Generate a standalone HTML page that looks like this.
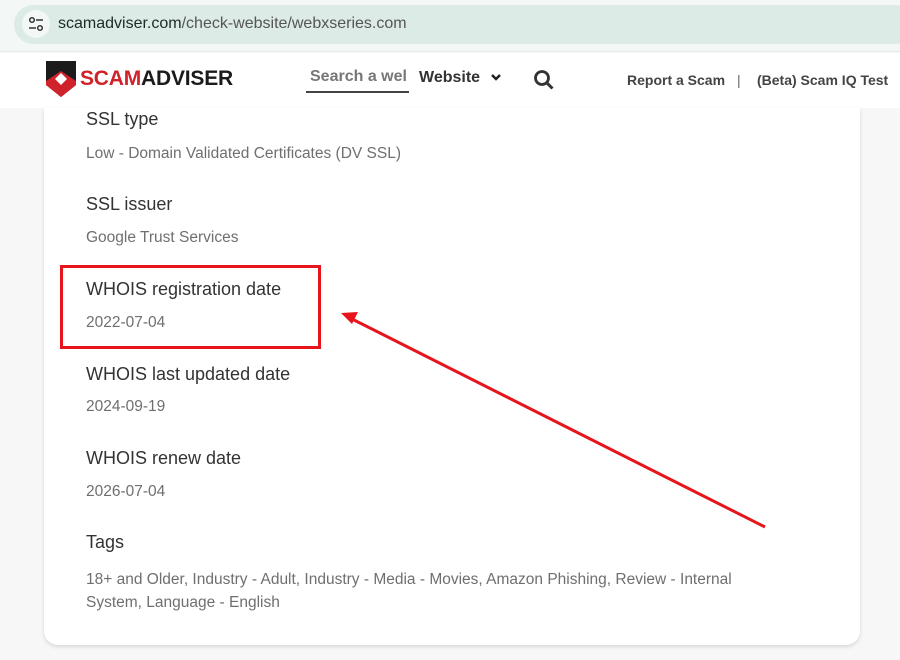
<!DOCTYPE html>
<html><head><style>
*{margin:0;padding:0;box-sizing:border-box}
body{width:900px;height:660px;overflow:hidden;background:#f7f7f7;font-family:"Liberation Sans",sans-serif;position:relative}
.top{position:absolute;left:0;top:0;width:900px;height:52px;background:#f3f7f6;border-bottom:1px solid #e3ebe9}
.pill{position:absolute;left:14px;top:5px;width:900px;height:39px;border-radius:20px;background:#dcebe6}
.ic{position:absolute;left:22px;top:10px;width:28px;height:28px;border-radius:50%;background:#f3f8f6}
.url{position:absolute;left:58px;top:15px;font-size:16px;color:#1f2a27}
.hdr{position:absolute;left:0;top:53px;width:900px;height:55px;background:#fff}
.card{position:absolute;left:44px;top:108px;width:816px;height:537px;background:#fff;border-radius:0 0 14px 14px;box-shadow:0 2px 4px rgba(0,0,0,.12)}
.l{position:absolute;left:86px;font-size:18px;color:#333}
.v{position:absolute;left:86px;font-size:15.5px;color:#6f6f6f}
</style></head><body>
<div class="top"><div class="pill"></div><div class="ic"></div>
<svg style="position:absolute;left:26px;top:14px" width="20" height="20" viewBox="0 0 20 20"><circle cx="6" cy="6" r="2.3" fill="none" stroke="#333" stroke-width="1.5"/><line x1="10" y1="6" x2="17" y2="6" stroke="#333" stroke-width="1.5"/><circle cx="14" cy="14" r="2.3" fill="none" stroke="#333" stroke-width="1.5"/><line x1="3" y1="14" x2="10" y2="14" stroke="#333" stroke-width="1.5"/></svg>
<div class="url">scamadviser.com<span style="color:#555">/check-website/webxseries.com</span></div></div>
<div class="hdr">
<svg style="position:absolute;left:46px;top:6px" width="30" height="40" viewBox="0 0 30 40"><path d="M0 2 L30 2 L30 26 L15 38 L0 26Z" fill="#1b1b1b"/><path d="M0 22 L15 12 L30 22 L30 26 L15 38 L0 26Z" fill="#d0222a"/><path d="M9 20 L15 14 L21 20 L15 26Z" fill="#fff"/></svg>
<div style="position:absolute;left:80px;top:14px;font-size:21px;font-weight:bold;letter-spacing:-0.2px;color:#1b1b1b"><span style="color:#d0222a">SCAM</span>ADVISER</div>
<div style="position:absolute;left:306px;top:15px;width:103px;height:25px;border-bottom:2px solid #444;font-size:16px;color:#777;overflow:hidden;white-space:nowrap;font-weight:bold;padding-left:4px">Search a wel</div>
<div style="position:absolute;left:419px;top:16px;font-size:16px;font-weight:bold;color:#333">Website</div>
<svg style="position:absolute;left:490px;top:21px" width="12" height="8" viewBox="0 0 12 8"><path d="M2 1 L6 5 L10 1" fill="none" stroke="#222" stroke-width="2.5"/></svg>
<svg style="position:absolute;left:533px;top:16px" width="22" height="22" viewBox="0 0 22 22"><circle cx="9" cy="9" r="6.5" fill="none" stroke="#333" stroke-width="2.8"/><line x1="14" y1="14" x2="19.5" y2="19.5" stroke="#333" stroke-width="3"/></svg>
<div style="position:absolute;left:627px;top:19px;font-size:14px;font-weight:bold;color:#444">Report a Scam</div>
<div style="position:absolute;left:737px;top:19px;font-size:14px;color:#666">|</div>
<div style="position:absolute;left:757px;top:19px;font-size:14px;font-weight:bold;color:#444">(Beta) Scam IQ Test</div>
</div>
<div class="card"></div>
<div class="l" style="top:109px">SSL type</div>
<div class="v" style="top:145px">Low - Domain Validated Certificates (DV SSL)</div>
<div class="l" style="top:194px">SSL issuer</div>
<div class="v" style="top:229px">Google Trust Services</div>
<div class="l" style="top:279px">WHOIS registration date</div>
<div class="v" style="top:314px">2022-07-04</div>
<div class="l" style="top:364px">WHOIS last updated date</div>
<div class="v" style="top:398px">2024-09-19</div>
<div class="l" style="top:448px">WHOIS renew date</div>
<div class="v" style="top:483px">2026-07-04</div>
<div class="l" style="top:532px">Tags</div>
<div class="v" style="top:568px;width:700px;line-height:23px">18+ and Older, Industry - Adult, Industry - Media - Movies, Amazon Phishing, Review - Internal System, Language - English</div>
<div style="position:absolute;left:60px;top:265px;width:261px;height:84px;border:3px solid #e8141c"></div>
<svg style="position:absolute;left:0;top:0" width="900" height="660"><line x1="765" y1="527" x2="352" y2="319" stroke="#e8141c" stroke-width="3"/><path d="M341 313 L358 312 L352 324Z" fill="#e8141c"/></svg>
</body></html>
